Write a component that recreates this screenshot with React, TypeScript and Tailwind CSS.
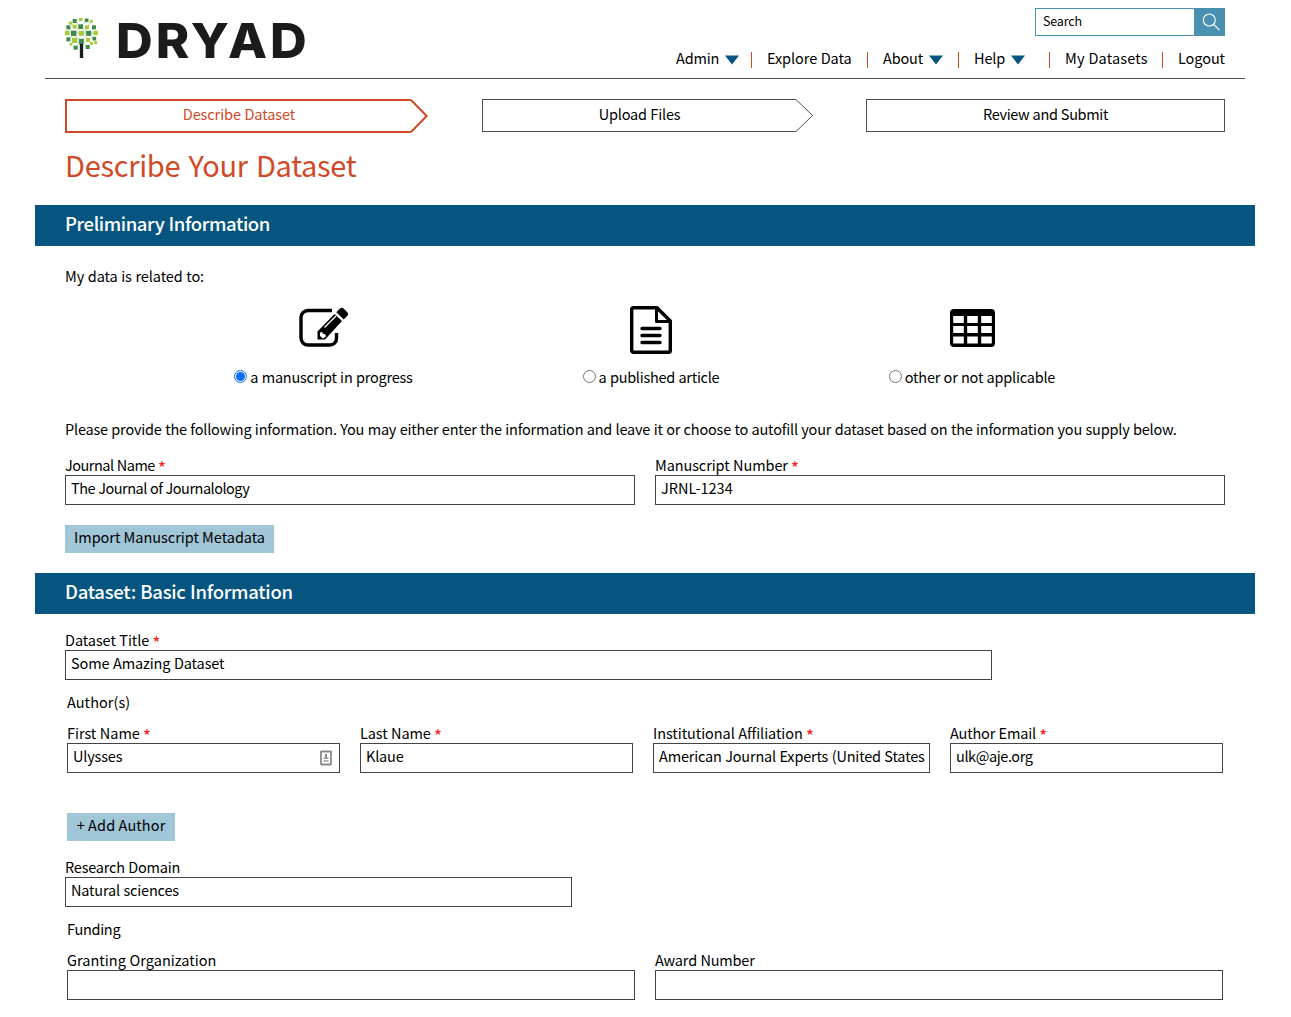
import type { ReactNode } from "react";

function Tree() {
  const L = "#a5cd39";
  const D = "#3f8a4b";
  const cells: [number, number, number, string][] = [
    [122, 58, 11, L], [104, 63, 12, D], [140, 61, 11, D], [91, 69, 9, L], [154, 64, 9, L],
    [85, 82, 12, D], [104, 80, 12, L], [122, 80, 14, D], [141, 82, 12, L], [162, 82, 12, D],
    [82, 99, 14, L], [101, 100, 16, D], [124, 100, 15, L], [146, 100, 15, D], [167, 99, 13, L],
    [85, 118, 12, D], [104, 121, 16, L], [124, 124, 15, D], [144, 120, 12, L], [163, 116, 11, D],
    [167, 128, 9, L], [93, 133, 8, L], [107, 143, 12, D], [143, 141, 12, D], [154, 130, 9, L],
  ];
  return (
    <svg width="33" height="40" viewBox="75 54 99 120" className="shrink-0">
      <path d="M104 63 122 80 140 61M85 82l17 18 20-20 24 20 16-18M91 69l13 11M154 64l-13 18M82 99h85M85 118l16-18 23 24 22-24 17 16M107 143l17-19 19 17" stroke="#9cc99a" strokeWidth="2.5" fill="none" />
      {cells.map(([x, y, s, c]) => (
        <rect key={`${x}-${y}`} x={x - s / 2} y={y - s / 2} width={s} height={s} fill={c} />
      ))}
      <rect x="119.500" y="131" width="10" height="43" fill="#1c1c1c" />
    </svg>
  );
}

function NavItem({ label, menu, className }: { label: string; menu?: boolean; className: string }) {
  return (
    <a className={`flex h-4 items-center whitespace-nowrap ${className}`}>
      <span className="mb-[5px]">{label}</span>
      {menu && (
        <svg width="14" height="10" viewBox="0 0 14 10" className="ml-1.5 shrink-0">
          <path d="M0 0.5h14L7 9.5z" fill="#055580" />
        </svg>
      )}
    </a>
  );
}

function Banner({ children, className = "" }: { children: ReactNode; className?: string }) {
  return (
    <h2 className={`-mx-[30px] h-[41px] bg-[#055580] px-[30px] text-[18.5px] leading-[37px] font-medium text-white ${className}`}>
      {children}
    </h2>
  );
}

function Field({ label, value = "", required, icon, className, labelClass = "", valueClass = "" }: { label: string; value?: string; required?: boolean; icon?: ReactNode; className: string; labelClass?: string; valueClass?: string }) {
  return (
    <label className={`block ${className}`}>
      <span className="flex h-[18px] gap-[3px] whitespace-nowrap leading-4">
        <span className={labelClass}>{label}</span>
        {required && <span className="mt-0.5 text-[18px] text-[#ff1a1a]">*</span>}
      </span>
      <span className="flex h-[30px] items-center justify-between overflow-hidden border border-[#444] pr-[7px] pl-[5px]">
        <span className={`mb-1 whitespace-nowrap leading-5 ${valueClass}`}>{value}</span>
        {icon}
      </span>
    </label>
  );
}

function Choice({ label, checked, children, className, labelClass = "" }: { label: string; checked?: boolean; children: ReactNode; className: string; labelClass?: string }) {
  return (
    <div className={`flex flex-col items-center ${className}`}>
      <div className="flex h-[52px] items-center">{children}</div>
      <label className="mt-[11px] flex h-5 items-center gap-[3px] whitespace-nowrap">
        {checked ? (
          <span className="mb-0.5 flex size-[13px] items-center justify-center rounded-full border border-[#0d6efd]">
            <span className="size-[9px] rounded-full bg-[#0d6efd]" />
          </span>
        ) : (
          <span className="mb-0.5 size-[13px] rounded-full border border-[#767676]" />
        )}
        <span className={`leading-5 ${labelClass}`}>{label}</span>
      </label>
    </div>
  );
}

function ContactIcon() {
  return (
    <svg width="12" height="16" viewBox="0 0 12 16" className="shrink-0">
      <rect x="1" y="1.5" width="10" height="13" rx="0.5" fill="#fff" stroke="#8a8a8a" strokeWidth="1.8" />
      <path d="M6 4v4" stroke="#8a8a8a" strokeWidth="2" />
      <path d="M3.500 8.300h5M3.500 11h5" stroke="#999" strokeWidth="1.5" />
    </svg>
  );
}

export default function App() {
  return (
    <div className="h-[1017px] w-[1291px] overflow-hidden bg-white font-['Noto_Sans_CJK_SC',sans-serif] text-[14.5px] tracking-[-0.18px] [word-spacing:0.4px] text-black">
      <header className="mx-[45px] flex h-[79px] w-[1200px] justify-between border-b border-[#4d4d4d] px-5">
        <div className="mt-[18px] flex h-10">
          <Tree />
          <span className="ml-[18px] origin-left scale-x-[1.07] font-['Inter',sans-serif] text-[47.5px] leading-[45px] font-extrabold tracking-[2.8px] text-[#1b1b1b]">DRYAD</span>
        </div>
        <div className="flex flex-col items-end">
          <div className="mt-2 flex h-7 w-[190px] border border-[#4a90b0]">
            <span className="flex-1 pl-[7px] text-[12.5px] leading-[23px]">Search</span>
            <span className="flex w-[30px] items-center justify-center bg-[#4a90b0]">
              <svg width="18" height="18" viewBox="0 0 18 18" fill="none" stroke="#fff" strokeWidth="1.1" className="ml-[3px]">
                <circle cx="7.3" cy="7" r="6" />
                <path d="M11.6 11.3 17.3 17" />
              </svg>
            </span>
          </div>
          <nav className="mt-4 flex">
            <NavItem label="Admin" menu className="w-[75px]" />
            <NavItem label="Explore Data" className="w-[116px] border-l border-[#d14a28] pl-[15px] tracking-[-0.08px]" />
            <NavItem label="About" menu className="w-[91px] border-l border-[#d14a28] pl-[15px]" />
            <NavItem label="Help" menu className="w-[91px] border-l border-[#d14a28] pl-[15px]" />
            <NavItem label="My Datasets" className="w-[113px] border-l border-[#d14a28] pl-[15px] tracking-[0.15px]" />
            <NavItem label="Logout" className="w-[63px] border-l border-[#d14a28] pl-[15px] tracking-[-0.08px]" />
          </nav>
        </div>
      </header>

      <main className="mx-[65px] w-[1160px]">
        <div className="mt-5 flex h-[34px] items-start text-center leading-[26px]">
          <div className="flex w-[417px] text-[#d14a28]">
            <div className="h-[34px] w-[346px] border-2 border-r-0 border-[#d14a28] tracking-[-0.08px]">Describe Dataset</div>
            <svg width="18" height="34" viewBox="0 0 18 34" fill="none" stroke="#d14a28" strokeWidth="2">
              <path d="M0 1 15.700 17 0 33" />
            </svg>
          </div>
          <div className="flex w-[384px]">
            <div className="h-[33px] w-[314px] border border-r-0 border-[#4d4d4d] leading-[28px]">Upload Files</div>
            <svg width="18" height="33" viewBox="0 0 18 33" fill="none" stroke="#4d4d4d">
              <path d="M0 0.5 16.5 16.5 0 32.5" />
            </svg>
          </div>
          <div className="h-[33px] w-[359px] border border-[#4d4d4d] leading-[28px] tracking-[-0.35px]">Review and Submit</div>
        </div>

        <h1 className="mt-[9px] h-[63px] text-[29px] leading-[44px] tracking-[-0.3px] [word-spacing:2px] text-[#d14a28]">Describe Your Dataset</h1>

        <Banner className="tracking-[-0.39px]">Preliminary Information</Banner>
        <p className="mt-5 leading-5 tracking-[-0.08px]">My data is related to:</p>

        <div className="mt-[18px] ml-[168px] flex">
          <Choice label="a manuscript in progress" checked className="w-[181px]" labelClass="tracking-[-0.22px]">
            <svg width="50" height="44" viewBox="0 0 50 44" className="mb-1">
              <path d="M33 4.500H9a7 7 0 0 0-7 7V32a7 7 0 0 0 7 7h22a6.500 6.500 0 0 0 6.500-6.500V27" fill="none" stroke="#000" strokeWidth="3.4" />
              <path d="M18.500 33.500 18.500 25.500 35.500 8 43 15 26 33.500z" fill="#000" />
              <path d="M37.300 6.200 41 2.500a2.500 2.500 0 0 1 3.500 0l3.800 3.800a2.500 2.500 0 0 1 0 3.500L44.700 13.500z" fill="#000" />
              <path d="m25.500 21.500 11.500-11.500" stroke="#fff" strokeWidth="1.2" />
              <path d="m21 26.500 2-.5 1 1.800 2.500.7.500 2-3 2-3-2.500z" fill="#fff" />
            </svg>
          </Choice>
          <Choice label="a published article" className="ml-[168px] w-[138px]" labelClass="tracking-[-0.26px]">
            <svg width="42" height="48" viewBox="0 0 42 48" fill="none" stroke="#000" strokeWidth="3.4" strokeLinejoin="round">
              <path d="M3.500 1.700h23.500L40.300 15v29.500a1.800 1.800 0 0 1-1.800 1.800h-35a1.800 1.800 0 0 1-1.800-1.800v-41a1.800 1.800 0 0 1 1.800-1.800z" />
              <path d="M26.500 2v13.500H40" strokeWidth="3" />
              <path d="M12 22.500h18M12 29.500h18M12 36.500h18" strokeWidth="3.4" strokeLinecap="round" />
            </svg>
          </Choice>
          <Choice label="other or not applicable" className="ml-[168px] w-[168px]" labelClass="tracking-[-0.22px]">
            <svg width="45" height="38" viewBox="0 0 45 38" className="mb-1">
              <rect width="45" height="38" rx="4" fill="#000" />
              {[7, 17, 27.5].map((y) =>
                [3.2, 17.2, 31.2].map((x) => <rect key={`${x}-${y}`} x={x} y={y} width="10.6" height="7" fill="#fff" />)
              )}
            </svg>
          </Choice>
        </div>

        <p className="mt-8 h-5 whitespace-nowrap leading-5 tracking-[-0.2px]">
          Please provide the following information. You may either enter the information and leave it or choose to autofill your dataset based on the information you supply below.
        </p>
        <div className="mt-[18px] flex gap-5">
          <Field label="Journal Name" required value="The Journal of Journalology" className="w-[570px]" labelClass="tracking-[-0.5px]" valueClass="tracking-[-0.5px]" />
          <Field label="Manuscript Number" required value="JRNL-1234" className="w-[570px]" labelClass="tracking-[-0.1px]" valueClass="tracking-[0px]" />
        </div>
        <button className="mt-5 block h-7 w-[209px] bg-[#a0c6d8] pb-[5px] leading-[23px] tracking-[-0.03px]">Import Manuscript Metadata</button>

        <Banner className="mt-5 tracking-[-0.26px]">Dataset: Basic Information</Banner>
        <Field label="Dataset Title" required value="Some Amazing Dataset" className="mt-[18px] w-[927px]" labelClass="tracking-[-0.08px]" valueClass="tracking-[-0.12px]" />
        <p className="mt-3 ml-0.5 h-[33px] leading-5 tracking-[0.05px]">Author(s)</p>
        <div className="mx-0.5 flex gap-5">
          <Field label="First Name" required value="Ulysses" className="w-[273px]" icon={<ContactIcon />} labelClass="tracking-[-0.05px]" />
          <Field label="Last Name" required value="Klaue" className="w-[273px]" labelClass="tracking-[-0.12px]" />
          <Field label="Institutional Affiliation" required value="American Journal Experts (United States" className="w-[277px]" labelClass="tracking-[-0.07px]" />
          <Field label="Author Email" required value="ulk@aje.org" className="w-[273px]" valueClass="tracking-[-0.42px]" />
        </div>
        <button className="mt-10 ml-0.5 block h-7 w-[108px] bg-[#a0c6d8] pb-[5px] leading-[23px] tracking-[0.1px]">+ Add Author</button>
        <Field label="Research Domain" value="Natural sciences" className="mt-[18px] w-[507px]" labelClass="tracking-[-0.22px]" />
        <p className="mt-3 ml-0.5 h-[33px] leading-5 tracking-[-0.3px]">Funding</p>
        <div className="mx-0.5 flex gap-5">
          <Field label="Granting Organization" className="w-[568px]" labelClass="tracking-[0.02px]" />
          <Field label="Award Number" className="w-[568px]" />
        </div>
      </main>
    </div>
  );
}
